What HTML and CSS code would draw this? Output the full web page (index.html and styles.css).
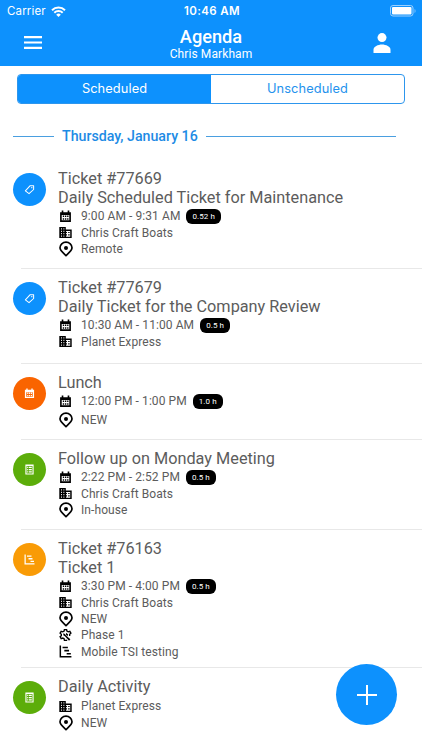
FILE: index.html
```html
<!DOCTYPE html>
<html lang="en">
<head>
    <meta charset="UTF-8">
    <meta name="viewport" content="width=device-width, initial-scale=1.0">
    <title>Agenda</title>
    <link rel="stylesheet" href="styles.css">
</head>
<body>
    <!-- Icon definitions -->
    <svg class="sprite" width="0" height="0">
        <symbol id="calendar" viewBox="0 0 24 24">
            <path fill-rule="evenodd" d="M5 1h3v3h8V1h3v3h3v18H2V4h3zM5 9v10h14V9z"/>
            <path d="M7 10h2.500v3H7zm4 0h2.500v3H11zm4 0h2.500v3H15zm-8 5h2.500v3H7zm4 0h2.500v3H11zm4 0h2.500v3H15z"/>
        </symbol>
        <symbol id="company" viewBox="1 1 22 22">
            <path d="M12.500 7V2.500H1.500v19h21V7zM6 19H4.500v-2H6zm0-4H4.500v-2H6zm0-4H4.500V9H6zm0-4H4.500V5H6zm4 12H8.500v-2H10zm0-4H8.500v-2H10zm0-4H8.500V9H10zm0-4H8.500V5H10zm10 12h-7v-2h1.500v-2H13v-2h1.500v-2H13V9.500h7zm-1-8h-2.500v2H19zm0 4h-2.500v2H19z"/>
        </symbol>
        <symbol id="pin" viewBox="0 0 16 16">
            <path d="M8 14.500C5 11.800 2 9.700 2 6.800a6 5.600 0 0 1 12 0c0 2.900-3 5-6 7.700z" fill="none" stroke="currentColor" stroke-width="1.700"/>
            <circle cx="8" cy="6.900" r="2"/>
        </symbol>
        <symbol id="phase" viewBox="0 0 24 24">
            <path d="M15 20.500l-1 .5h-4l-.6-3-2.400-1.300-3 1-2-3.400 2.300-2V9.700L2 7.700l2-3.400 3 1L9.400 4 10 1h4l.6 3L17 5.300l3-1 2 3.400-2.300 2v3" fill="none" stroke="currentColor" stroke-width="2.500"/>
            <path d="M8 8l3 1 2 3 8 7-2.500 2.500-7.500-8-3-2z"/>
            <path d="M13 7l4 3-1 3-3-2z"/>
        </symbol>
        <symbol id="chart" viewBox="1 1 22 22">
            <path d="M2 2h2.500v17.500H22V22H2zM7 4h9v2.600H7zm3 5.200h8v2.600h-8zm4 5.200h7V17h-7z"/>
        </symbol>
        <symbol id="tag" viewBox="0 0 24 24">
            <path d="M3 15L13 4h8v8L11 21z" fill="none" stroke="currentColor" stroke-width="2.200" stroke-linejoin="round"/>
            <circle cx="17" cy="8" r="1.500"/>
        </symbol>
        <symbol id="note" viewBox="0 0 24 24">
            <path fill-rule="evenodd" d="M3 1h18v22H3zM5.500 4.500v16h13v-16z"/>
            <path d="M7 6h2v2.500H7zm3.500 0H17v2.500h-6.500zM7 11h2v2.500H7zm3.500 0H17v2.500h-6.500zM7 16h2v2.500H7zm3.500 0H17v2.500h-6.500z"/>
        </symbol>
    </svg>

    <header class="header">
        <div class="status-bar">
            <div class="carrier">
                <span>Carrier</span>
                <svg width="15" height="11" viewBox="0 0 15 11" fill="none" stroke="#fff" stroke-width="2">
                    <path d="M1 4.200a9.300 9.300 0 0 1 13 0M3.300 6.700a6 6 0 0 1 8.400 0"/>
                    <path d="M7.500 11L5.200 8.700a3.300 3.300 0 0 1 4.600 0z" fill="#fff" stroke="none"/>
                </svg>
            </div>
            <div class="clock">10:46 AM</div>
            <svg class="battery" width="27" height="12" viewBox="0 0 27 12">
                <rect x=".5" y=".5" width="22.500" height="10.500" rx="2.500" fill="none" stroke="#9bd0ff"/>
                <rect x="2" y="2" width="19.500" height="7.500" rx="1" fill="#fff"/>
                <path d="M24.500 4v4c1.500-.5 1.500-3.500 0-4z" fill="#7bc1ff"/>
            </svg>
        </div>
        <div class="nav">
            <svg class="menu" width="18" height="13" viewBox="0 0 18 13" fill="#fff">
                <path d="M0 0h18v2.200H0zm0 5.400h18v2.200H0zm0 5.400h18V13H0z"/>
            </svg>
            <div class="heading">
                <h1>Agenda</h1>
                <p>Chris Markham</p>
            </div>
            <svg class="user" width="18" height="20" viewBox="0 0 18 20" fill="#fff">
                <circle cx="9" cy="4.600" r="4.500"/>
                <path d="M.5 20v-3.300C.5 13.600 5 11.500 9 11.500s8.500 2.100 8.500 5.200V20z"/>
            </svg>
        </div>
    </header>

    <div class="tabs">
        <div class="tab active">Scheduled</div>
        <div class="tab">Unscheduled</div>
    </div>

    <div class="date"><span>Thursday, January 16</span></div>

    <main class="list">
        <div class="item item-first">
            <div class="avatar blue"><svg><use href="#tag"/></svg></div>
            <div class="info">
                <h2>Ticket #77669<br>Daily Scheduled Ticket for Maintenance</h2>
                <div class="row"><svg><use href="#calendar"/></svg>9:00 AM - 9:31 AM<span class="badge">0.52 h</span></div>
                <div class="row"><svg><use href="#company"/></svg>Chris Craft Boats</div>
                <div class="row"><svg class="pin"><use href="#pin"/></svg>Remote</div>
            </div>
        </div>
        <div class="item">
            <div class="avatar blue"><svg><use href="#tag"/></svg></div>
            <div class="info">
                <h2>Ticket #77679<br>Daily Ticket for the Company Review</h2>
                <div class="row"><svg><use href="#calendar"/></svg>10:30 AM - 11:00 AM<span class="badge">0.5 h</span></div>
                <div class="row"><svg><use href="#company"/></svg>Planet Express</div>
            </div>
        </div>
        <div class="item item-short">
            <div class="avatar orange"><svg><use href="#calendar"/></svg></div>
            <div class="info">
                <h2>Lunch</h2>
                <div class="row"><svg><use href="#calendar"/></svg>12:00 PM - 1:00 PM<span class="badge">1.0 h</span></div>
                <div class="row spaced"><svg class="pin"><use href="#pin"/></svg>NEW</div>
            </div>
        </div>
        <div class="item item-medium">
            <div class="avatar green"><svg><use href="#note"/></svg></div>
            <div class="info">
                <h2>Follow up on Monday Meeting</h2>
                <div class="row"><svg><use href="#calendar"/></svg>2:22 PM - 2:52 PM<span class="badge">0.5 h</span></div>
                <div class="row"><svg><use href="#company"/></svg>Chris Craft Boats</div>
                <div class="row"><svg class="pin"><use href="#pin"/></svg>In-house</div>
            </div>
        </div>
        <div class="item item-tall">
            <div class="avatar amber"><svg><use href="#chart"/></svg></div>
            <div class="info">
                <h2>Ticket #76163<br>Ticket 1</h2>
                <div class="row"><svg><use href="#calendar"/></svg>3:30 PM - 4:00 PM<span class="badge">0.5 h</span></div>
                <div class="row"><svg><use href="#company"/></svg>Chris Craft Boats</div>
                <div class="row"><svg class="pin"><use href="#pin"/></svg>NEW</div>
                <div class="row"><svg><use href="#phase"/></svg>Phase 1</div>
                <div class="row"><svg><use href="#chart"/></svg>Mobile TSI testing</div>
            </div>
        </div>
        <div class="item">
            <div class="avatar green"><svg><use href="#note"/></svg></div>
            <div class="info">
                <h2>Daily Activity</h2>
                <div class="row spaced"><svg><use href="#company"/></svg>Planet Express</div>
                <div class="row"><svg class="pin"><use href="#pin"/></svg>NEW</div>
            </div>
        </div>
    </main>

    <div class="add">
        <svg width="20" height="20" viewBox="0 0 20 20" fill="#fff"><path d="M9 0h2v9h9v2h-9v9H9v-9H0V9h9z"/></svg>
    </div>
</body>
</html>
```
FILE: styles.css
```css
* {
    box-sizing: border-box;
}
body {
    margin: 0;
    height: 750px;
    overflow: hidden;
    background-color: #fff;
    color: #5c5c5c;
    font-family: Roboto, sans-serif;
}
.sprite {
    display: block;
}
.header {
    height: 66px;
    background-color: #0d91fd;
    color: #fff;
}
.status-bar {
    display: grid;
    grid-template-columns: 1fr auto 1fr;
    align-items: center;
    height: 22px;
    padding: 0 5px 0 7px;
    font-family: Inter, sans-serif;
    font-size: 11.5px;
}
.carrier {
    display: flex;
    align-items: center;
    gap: 5px;
    letter-spacing: 0.15px;
}
.clock {
    font-weight: 600;
    letter-spacing: 0.4px;
}
.battery {
    justify-self: end;
}
.nav {
    display: grid;
    grid-template-columns: 1fr auto 1fr;
    align-items: center;
    height: 41px;
    padding: 0 24px;
}
.heading {
    text-align: center;
}
.menu {
    justify-self: start;
}
.user {
    justify-self: end;
    margin-right: 7px;
}
.heading h1 {
    margin: 3px 0 0;
    font-size: 18.2px;
    line-height: 20px;
    font-weight: 500;
}
.heading p {
    margin: 0;
    font-size: 12px;
    line-height: 15px;
    letter-spacing: 0.1px;
}
.tabs {
    display: flex;
    height: 30px;
    margin: 8px 17px 0;
    border: 1px solid #2d96ed;
    border-radius: 4px;
    overflow: hidden;
}
.tab {
    flex: 1;
    text-align: center;
    font-family: Inter, sans-serif;
    font-size: 12.8px;
    line-height: 28px;
    letter-spacing: 0.1px;
    color: #2492ed;
}
.tab.active {
    background-color: #0d91fd;
    color: #fff;
}
.date {
    display: flex;
    align-items: center;
    gap: 8px;
    height: 20px;
    margin: 22px 26px 0 13px;
    color: #1d8be5;
    font-size: 14.2px;
    font-weight: 500;
}
.date::before, .date::after {
    content: "";
    height: 1px;
    background-color: #4a9fe0;
}
.date::before {
    width: 41px;
}
.date::after {
    flex: 1;
}
.list {
    margin-top: 14px;
}
.item {
    display: flex;
    height: 95px;
    padding: 9px 0 0 13px;
    /* divider starts after the left margin */
    background: linear-gradient(#e8e8e8, #e8e8e8) 21px 100% / 100% 1px no-repeat;
}
.item-first {
    height: 109px;
}
.item-short {
    height: 76px;
}
.item-medium {
    height: 90px;
}
.item-tall {
    height: 138px;
}
.item:last-child {
    background: none;
}
.avatar {
    display: flex;
    align-items: center;
    justify-content: center;
    width: 33px;
    height: 33px;
    margin: 4px 12px 0 0;
    border-radius: 50%;
    color: #fff;
}
.avatar svg {
    width: 11px;
    height: 11px;
    fill: currentColor;
}
.blue {
    background-color: #0d91fd;
}
.orange {
    background-color: #fa6400;
}
.green {
    background-color: #5cad0a;
}
.amber {
    background-color: #f99b06;
}
.info h2 {
    margin: 0 0 1px;
    font-size: 16.27px;
    line-height: 19px;
    font-weight: 400;
}
.row {
    display: flex;
    align-items: center;
    height: 16.4px;
    font-size: 12px;
    letter-spacing: 0.08px;
}
.row svg {
    width: 13px;
    height: 13px;
    margin: 0 9px 0 1px;
    color: #000;
    fill: #000;
}
.row .pin {
    width: 16px;
    height: 16px;
    margin: 0 7px 0 0;
}
.spaced {
    margin-top: 2px;
}
.badge {
    height: 15px;
    margin-left: 6px;
    padding: 0 6px;
    border-radius: 6px;
    background-color: #000;
    color: #fff;
    font-size: 8px;
    line-height: 15px;
}
.add {
    position: absolute;
    left: 336px;
    top: 664px;
    display: flex;
    align-items: center;
    justify-content: center;
    width: 61px;
    height: 61px;
    border-radius: 50%;
    background-color: #0d91fd;
}
```
